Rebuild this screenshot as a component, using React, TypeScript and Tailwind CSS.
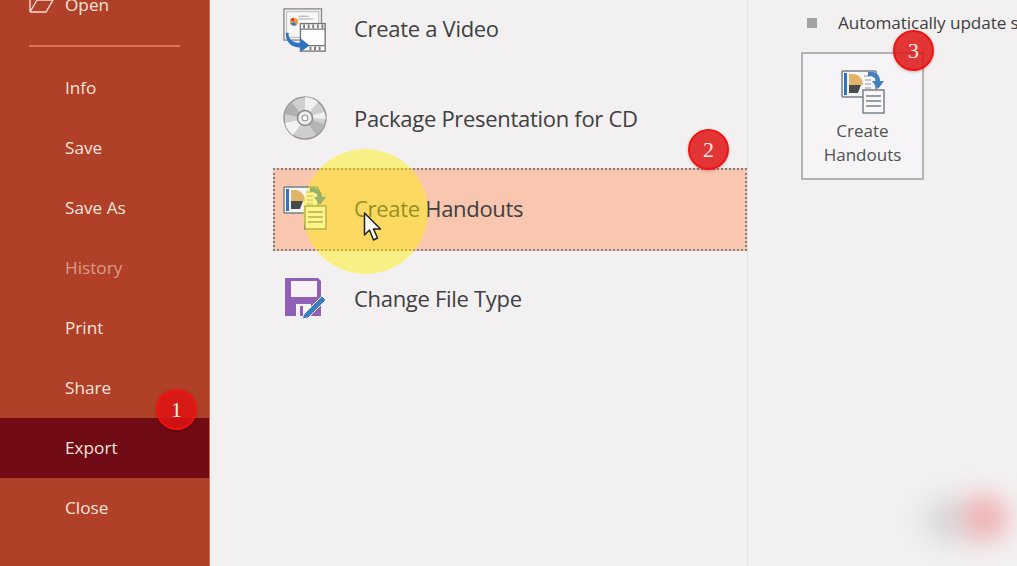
const sideItems = [
  { label: 'Info' },
  { label: 'Save' },
  { label: 'Save As' },
  { label: 'History', muted: true },
  { label: 'Print' },
  { label: 'Share' },
  { label: 'Export', active: true },
  { label: 'Close' },
];

function OpenIcon() {
  return (
    <svg width="26" height="16" viewBox="0 0 26 16" fill="none" stroke="#f6d9cf" strokeWidth="1.4">
      <path d="M1 15V1h7l2 2M1 15h16l7-12H8L1 15" />
    </svg>
  );
}

function VideoIcon() {
  return (
    <svg className="mt-[4px]" width="46" height="46" viewBox="0 0 48 48" fill="none">
      <rect x="1" y="1" width="41" height="34" fill="#f3f1f2" stroke="#8c8c8c" strokeWidth="1.5" />
      <rect x="4" y="4" width="35" height="28" fill="#f8f8f8" stroke="#b5b5b5" />
      <path d="M17 9h11M17 12h16" stroke="#a0a0a0" />
      <circle cx="12" cy="15" r="4.5" fill="#e8a33d" />
      <path d="M12 15V10.500A4.500 4.500 0 0 0 8 13z" fill="#d8392b" />
      <path d="M12 15l3 3a4.500 4.500 0 0 1-7 -1z" fill="#3f7fc4" />
      <rect x="19" y="17" width="27" height="30" fill="#fff" stroke="#777" strokeWidth="1.500" />
      <path d="M19 23h27M19 41h27" stroke="#777" strokeWidth="1.500" />
      <path d="M23 18v4M28 18v4M33 18v4M38 18v4M43 18v4M30 42v4M35 42v4M40 42v4" stroke="#777" strokeWidth="2" />
      <path d="M6 27c0 7 4 11 13 11v-5l10 8-10 7v-5C9 43 3 38 3 27z" fill="#2f74c4" />
    </svg>
  );
}

function CdIcon() {
  return (
    <svg width="44" height="44" viewBox="0 0 44 44">
      <circle cx="22" cy="22" r="21" fill="#cfcfcf" stroke="#9a9a9a" strokeWidth="1.500" />
      <path d="M22 1a21 21 0 0 1 13 5l-9 11a7 7 0 0 0-4-1z" fill="#f0f0f0" />
      <path d="M2 18a21 21 0 0 1 7-11l9 11a6 6 0 0 0-2 3z" fill="#b0b0b0" />
      <path d="M16 24l-14 3a21 21 0 0 0 8 12l9-12z" fill="#f4f4f4" />
      <path d="M28 24l13 4a21 21 0 0 1-8 11l-8-11z" fill="#b5b5b5" />
      <path d="M41 16a21 21 0 0 1 2 7l-15-1a6 6 0 0 0-1-2z" fill="#f0f0f0" />
      <circle cx="22" cy="22" r="7.500" fill="#eee" stroke="#8a8a8a" strokeWidth="1.500" />
      <circle cx="22" cy="22" r="3" fill="#f8f8f8" stroke="#8a8a8a" />
    </svg>
  );
}

function HandoutIcon() {
  return (
    <svg width="44" height="44" viewBox="0 0 44 44" fill="none">
      <rect x="1" y="1" width="34" height="26" rx="1" fill="#f4f6f9" stroke="#7b7f87" strokeWidth="1.500" />
      <rect x="3" y="3" width="3" height="22" fill="#2f74c4" />
      <path d="M8 4h6a11 11 0 0 1 8 11H8z" fill="#e2b46a" />
      <path d="M8 15h12l-3 8H8z" fill="#4a4a4a" />
      <path d="M23 6h6M24 10h6M24 14h6M24 18h6" stroke="#9a9a9a" />
      <path d="M27 2c8-1 12 3 12 9h4l-6 8-6-8h4c0-3-3-5-8-5z" fill="#3f7fc4" />
      <rect x="22" y="20" width="21" height="23" fill="#f9f9f9" stroke="#7b7f87" strokeWidth="1.500" />
      <path d="M25 26h15M25 31h15M25 36h15" stroke="#7b7f87" strokeWidth="1.500" />
    </svg>
  );
}

function SaveAsIcon() {
  return (
    <svg width="44" height="42" viewBox="0 0 44 42">
      <path d="M2 1h33l3 3v35H2z" fill="#9060b8" />
      <rect x="8" y="4" width="26" height="16" fill="#f6f2f7" />
      <rect x="13" y="27" width="15" height="12" fill="#f6f2f7" />
      <rect x="17" y="29" width="3" height="10" fill="#9060b8" />
      <path d="M21 37l18-18 4 4-18 18-6 1z" fill="#3c7fc0" stroke="#f3f0f1" strokeWidth="1" />
    </svg>
  );
}

function Cursor() {
  return (
    <svg width="20" height="30" viewBox="0 0 20 30">
      <path d="M1.500 1v22l5-5 4 10 4-2-4-9h7z" fill="#fff" stroke="#222" strokeWidth="1.500" strokeLinejoin="round" />
    </svg>
  );
}

function Badge({ n, className }: { n: number; className: string }) {
  return (
    <div
      className={`absolute flex h-[41px] w-[41px] items-center justify-center rounded-full border-2 border-[#f21212] bg-[#de1414]/85 text-[22px] text-[#fdeaea] shadow-[0_1px_3px_rgba(0,0,0,0.25)] [font-family:'Liberation_Serif',serif] ${className}`}
    >
      {n}
    </div>
  );
}

function ExportRow({ icon, label }: { icon: React.ReactNode; label: string }) {
  return (
    <div className="flex h-[90px] items-center">
      <div className="ml-[10px] flex w-[44px] justify-center">{icon}</div>
      <span className="ml-[27px] text-[22px] tracking-[-0.3px] text-[#404040]">{label}</span>
    </div>
  );
}

export default function App() {
  return (
    <div className="relative flex h-[566px] w-[1017px] overflow-hidden bg-[#f3f0f1] [font-family:'Open_Sans',sans-serif]">
      {/* backstage nav */}
      <div className="flex h-full w-[210px] shrink-0 flex-col border-r border-[#c9705a] bg-[#b04027] text-[17.2px] text-[#f8e3dc]">
        <div className="mt-[-25px] flex h-[60px] shrink-0 items-center pl-[29px]">
          <OpenIcon />
          <span className="ml-[10px]">Open</span>
        </div>
        <div className="mx-[29px] mt-[10px] mb-[11px] h-[2px] bg-[#e0705a]" />
        {sideItems.map((item) => (
          <div
            key={item.label}
            className={`flex h-[60px] shrink-0 items-center pl-[65px] ${item.active ? 'bg-[#700a14]' : ''} ${item.muted ? 'text-[#d99c8c]' : ''}`}
          >
            {item.label}
          </div>
        ))}
      </div>

      {/* export types */}
      <div className="w-[538px] shrink-0 border-r border-[#e4e1e2] pl-[63px]">
        <div className="mt-[-17px]">
          <ExportRow icon={<VideoIcon />} label="Create a Video" />
          <ExportRow icon={<CdIcon />} label="Package Presentation for CD" />
          <div className="mt-[5px] mb-[2px] flex h-[83px] items-center border-2 border-dotted border-[#808080] bg-[#f9c6b0] pb-[3px]">
            <div className="ml-[8px] flex w-[44px] justify-center">
              <HandoutIcon />
            </div>
            <span className="ml-[27px] text-[22px] tracking-[-0.3px] text-[#404040]">Create Handouts</span>
          </div>
          <ExportRow icon={<SaveAsIcon />} label="Change File Type" />
        </div>
      </div>

      {/* details */}
      <div className="min-w-0 flex-1 pl-[53px] pt-[10px]">
        <div className="flex h-[26px] items-center whitespace-nowrap text-[17.2px] text-[#404040]">
          <span className="ml-[6px] h-[10px] w-[10px] shrink-0 bg-[#a3a1a2]" />
          <span className="ml-[21px] tracking-[-0.1px]">Automatically update slides</span>
        </div>
        <div className="mt-[16px] flex h-[128px] w-[123px] flex-col items-center border-2 border-[#b5b3b4] bg-[#f6f4f6] pt-[16px] text-center text-[17px] font-medium leading-[24px] text-[#505050]">
          <HandoutIcon />
          <div className="mt-[5px]">
            Create
            <br />
            Handouts
          </div>
        </div>
      </div>

      {/* click highlight + cursor */}
      <div className="absolute left-[303px] top-[149px] h-[125px] w-[125px] rounded-full bg-[#fff000]/45" />
      <div className="absolute left-[363px] top-[212px]">
        <Cursor />
      </div>

      <Badge n={1} className="left-[156px] top-[389px]" />
      <Badge n={2} className="left-[688px] top-[129px]" />
      <Badge n={3} className="left-[893px] top-[30px]" />

      {/* blurred out watermark */}
      <div className="absolute left-[925px] top-[500px] h-[40px] w-[50px] rounded-full bg-[#d6d4d5] blur-[14px]" />
      <div className="absolute left-[962px] top-[495px] h-[46px] w-[46px] rounded-full bg-[#efb2b2] blur-[12px]" />
    </div>
  );
}
